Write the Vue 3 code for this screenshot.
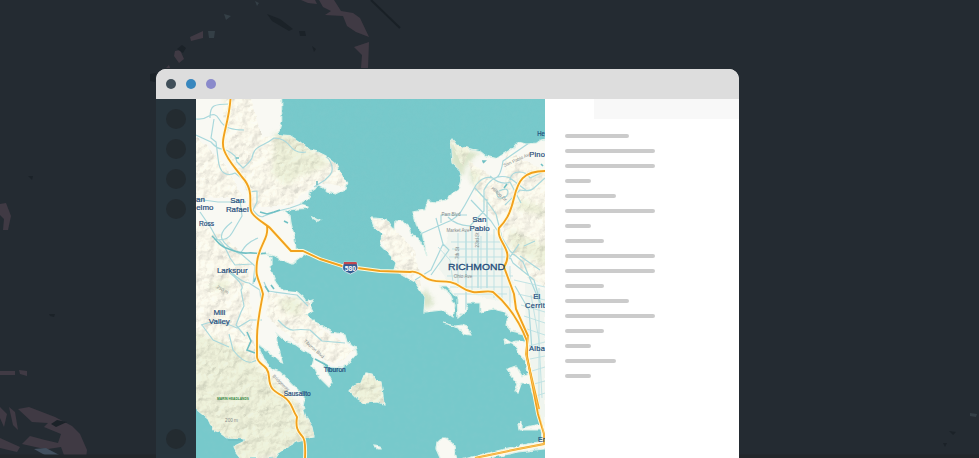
<script setup>
const lines = [64, 90, 90, 26, 51, 90, 26, 39, 90, 90, 39, 64, 90, 39, 26, 51, 26]
const labels = [
  ['San', 237.3, 203], ['Rafael', 237.3, 211.5], ['an', 200.5, 202], ['elmo', 204.8, 210.3],
  ['Mill', 219.3, 314.5], ['Valley', 219.3, 323.5], ['San', 479.3, 222], ['Pablo', 479.5, 230.5],
  ['El', 536.7, 299]
]
</script>

<template>
  <main class="page">
    <svg class="backdrop" viewBox="0 0 979 458" aria-hidden="true">
      <g class="mauve">
        <path d="M301 0 315 0 317 4 308 3ZM319 0 334 0 341 11 353 13 360 18 369 37 356 32 347 26 343 16 325 15 331 11 323 7ZM190 37 203 31 203 38 191 41ZM175 51 180 50 184 59 179 63 174 56ZM354 47 369 42 368 68 361 68 362 55ZM166 68 169 65 170 68Z" />
        <path d="M0 204 6 203 11 216 8 230 3 230 4 219 0 215ZM0 371H15V375H0ZM19 370 27 371 27 376 20 374ZM18 409 29 407 55 417 72 426 80 434 87 450 86 458 65 458 61 447 48 449 40 448 22 444 30 436 45 440 58 443 61 434 44 427 48 423 32 422ZM0 407 7 414 4 427 0 418ZM9 407 15 412 18 430 13 425ZM0 438 20 447 17 452 0 448Z" />
      </g>
      <g class="dark">
        <path d="M267 14 280 19 293 29 289 31 272 21ZM299 31 305 31 306 36 300 36ZM312 46 316 49 314 52ZM177 49 182 45 186 48 183 53ZM150 74 156 73 155 82 150 81ZM28 176 33 176 32 180ZM49 314 55 314 54 317 50 316ZM57 420 67 422 56 427 51 424ZM949 431 956 432 953 435ZM943 443 947 443 945 447Z" />
        <path d="M371 0 400 28" class="fault" />
      </g>
      <path class="steel" d="M34 449 46 448 65 458 50 458Z" />
      <path class="slate" d="M255 1 259 3 257 6ZM224 14 231 16 226 20ZM208 31 215 31 214 38 209 38ZM970 413 977 414 976 417 970 416Z" />
      <rect class="base" y="454.5" width="979" height="3.5" />
    </svg>

    <section class="window">
      <header class="titlebar">
        <i class="dot charcoal"></i><i class="dot blue"></i><i class="dot violet"></i>
      </header>
      <div class="body">
        <aside class="rail">
          <div class="group"><i v-for="n in 4" :key="n" class="knob"></i></div>
          <i class="knob"></i>
        </aside>

        <svg class="map" viewBox="196 99 349 359">
          <defs>
            <path id="land" d="M190 92H281.7V121L279 130 278 134.5 290 135.7 300 142 310 150 318 152 326 156 335 163 340 173 346.7 182 345 189 335 194 328 192 323 187 318 185 315 189 310.7 191.7 308 199 300 204 308 206 308 208.5 297 209 284 211 290 215 291 223 294 235 296 248 300 251 308 253.5 300 258 292 264 281.7 260 275 256 261 252 271 257 271 270 275 281 281.7 290 296.7 291.5 303 297 306.7 302 312.7 300 310 305 313 311 306.7 315 313 321 323 326 332 332 345 335 347 342 355 346 357 354 352 360 342 368 330 367 322 361 332 382 329 387 320 378 312 366 314 359 310 354 303 350 296 345 285 341 276 333 277 342 280 353 282.5 363 278 361 270 353 262 347 257 343 262 354 265 361 272 369 280 372 290 381.7 299 391 305 397 303 405 305.5 417 312 427 314 437 308 438 297 441 288 446 279 452 275 458H240L236 453 233 446.7 245 441 245 439 226.7 438 219 432 213 430 208 419 196 409H190Z
              M552 138 541 140 536.7 143 526 144 518 142 513 148 496.7 158.5 486 156 480 151 468 148 457 146 453 140 450.5 143 452 163 460 170 461.7 178 458 190 452 194 446 200 436 202 428 201 425 210 413 212 417 226 422 233 427 256 423 247 418 238 411.7 236 409 227 403 221 395 221 394 230 391 227 386 219 371 218 374 227 382 234 380 245 391 256 396 263 394 270 415 282 425 298 424 312 443 310 453 317 455 305 450 294 440 286 446 286 457 297 458 318 465 312 468 303 480 303 480 312 493 309 505 312 508 317 506 325 511 331 525 334 527 342 517 341 505 344 504 340 507 340 515 345 518 352 526 361 528 373 522 376 516 366 507 369 513 378 518 384 515 391 518 393 521 384 530 384 532 392 538 410 541 424 531 426 521 428 521 422 518 424 519 430 541 430 542 439 538 442 518 446 480 455 460 460H480L518 452 552 448Z
              M354 386 361 383 365 373 372 374 375 380 381 382 382 389 384 404 376 402 365 403 358 399 350 391Z M437 442 441 438 447 438 453 443 457 460H441L436 449Z M443 323 455 326 462 325 467 327 471 335 464 334 459 328Z M375 445 380 446 381 449 377 449Z M312 217 318 220 322 219 319 221 313 219Z" />
            <clipPath id="shore"><use href="#land" /></clipPath>
            <filter id="relief" x="0" y="0" width="100%" height="100%" color-interpolation-filters="sRGB">
              <feTurbulence type="fractalNoise" baseFrequency=".09" numOctaves="4" seed="8" />
              <feDiffuseLighting surfaceScale="1.7" diffuseConstant="1.07" lighting-color="#fffae6"><feDistantLight azimuth="225" elevation="66" /></feDiffuseLighting>
            </filter>
            <filter id="rough" filterUnits="userSpaceOnUse" x="190" y="92" width="362" height="372" color-interpolation-filters="sRGB">
              <feTurbulence type="fractalNoise" baseFrequency=".16" numOctaves="2" seed="5" result="n" />
              <feDisplacementMap in="SourceGraphic" in2="n" scale="4" xChannelSelector="R" yChannelSelector="G" />
            </filter>
            <filter id="soft"><feGaussianBlur stdDeviation="2.5" /></filter>
            <filter id="grain" x="0" y="0" width="100%" height="100%">
              <feTurbulence type="fractalNoise" baseFrequency=".18" numOctaves="2" seed="3" />
              <feColorMatrix values="0 0 0 0 .3  0 0 0 0 .6  0 0 0 0 .62  .6 0 0 0 -.22" />
            </filter>
            <clipPath id="hills">
              <path d="M190 92H248L262 137 288 135 340 163 346 187 318 182 290 205 250 208 242 175 225 150 222 92ZM190 130 225 165 243 198 190 198ZM190 220 222 235 248 260 250 300 253 340 265 370 305 410 315 435 304 460H190ZM268 292 308 302 320 328 355 350 335 365 290 338 266 315ZM350 370H385V405H350ZM452 140 470 150 462 168ZM372 219 386 220 415 250 425 310 395 270ZM506 150 552 175V290L524 275 503 238ZM468 160 510 190 500 225 477 195Z" />
            </clipPath>
          </defs>
          <rect x="196" y="99" width="349" height="359" fill="#77c9cb" />
          <rect x="196" y="99" width="349" height="359" filter="url(#grain)" opacity=".4" />
          <g filter="url(#rough)">
            <use href="#land" fill="#f9f9f3" stroke="#def1e9" stroke-width="1.2" />
            <g clip-path="url(#shore)">
              <g class="park" filter="url(#soft)">
                <path d="M274 134 292 134 311 150 330 160 323 168 300 176 286 185 273 175ZM449 138 456 146 480 153 467 164 462 177 451 164ZM470 169 481 173 477 187 470 179ZM190 330 222 342 244 350 263 372 287 393 303 411 315 433 304 450 240 460 222 437 190 410ZM207 287 225 292 230 280 215 282ZM278 300 300 298 302 315 286 313ZM511 228 527 239 552 247V268L527 258 508 246ZM519 198 545 208V216L515 208ZM352 376 382 376 383 403 352 402ZM425 288 434 302 426 310 419 299Z" />
              </g>
              <g clip-path="url(#hills)"><rect class="relief" x="190" y="92" width="362" height="372" filter="url(#relief)" /></g>
              <g class="built">
                <path d="M449 232 470 225 503 239 507 257 514 286 513 303 483 298 466 287 448 281 438 267Z" />
                <path d="M525 282 545 290V430L540 415 526 340Z" />
              </g>
            </g>
          </g>
          <g clip-path="url(#shore)">
            <g class="creek">
              <path d="M196 119Q203 120 209 116T219 119 229 128 244 130M196 135 211 142Q217 149 222 149T235 156L237 162 243 168Q250 162 252 158C254 145 263 147 274 138Q284 138 290 146T306 152M210 118Q210 108 214 106T229 104M214 119 211 138 216 142 218 158Q219 170 224 173T235 173L244 180 248 187M196 199 218 202 246 202M200 212 211 228 217 239Q224 243 230 258L235 265 252 264M214 239Q227 242 232 233L242 216 240 200M232 222Q219 232 222 239T240 254C243 250 245 243 258 238M248 192 257 191 257 202 253 210Q260 219 264 216L278 211 290 208 307 202M326 155Q336 168 330 175L325 180 314 187M240 253 255 266 253 284M232 273Q243 283 249 283L260 290 261 302M230 273Q246 286 241 290L244 306 241 312 236 325 245 336M201 325Q208 322 216 322T237 328L250 320 262 320M202 325 213 340 229 347M229 334 233 350Q244 364 252 362L260 359M264 282 268 291 290 294M273 292 297 295 308 306M278 320Q288 331 294 330T310 330L322 341 345 343" />
              <path d="M418 235 445 223Q458 219 465 205L476 185Q484 175 492 178T503 161L529 143M436 218 443 244 431 270 415 280M443 244 449 250 431 275M448 217Q455 225 470 226L484 211V190Q493 172 510 178L527 191M471 200 491 221 501 236 510 251 523 262 540 303M441 223V215H467M487 199V288M466 231V310M478 236V288M505 205 520 190Q530 192 534 188L545 178M524 246 535 241M520 256 540 270M515 286 529 310 532 350M519 244 506 263M490 176Q501 186 510 182L521 203M510 180Q511 172 519 172T530 178L545 171M475 188 486 200 496 214 503 242 513 263 534 280 541 305M499 191Q508 187 508 192T502 198 497 191" />
            </g>
            <path class="streets" d="M451 242H504M452 249H507M449 257H510M447 276H513M450 287H513M458 233V288M472 228V290M481 236V289M494 229V298M502 242V303M510 266V308M449 294H507M514 280 545 287M518 294 545 300M521 305 545 312M524 316 545 323M527 329 545 335M529 346 545 342M530 359 545 356M532 371 545 367M534 384 545 381M536 396 545 393M531 295 539 340 542 398M539 288V419M438 247 450 260 453 282" />
          </g>
          <g class="lagoon">
            <path d="M212 236C217 240 218 245 226 248S241 254 248 253 259 255 266 253M236 158 239 158M257 274 254 282M247 332 251 341 247 350 255 353M317 181V185M284 221 288 223M507 184 504 188M482 161 485 161 483 163M541 164 543 166M265 286 269 292M271 285 274 289M315 359 328 366M228 440 242 440M260 212 267 214 274 212 280 210" />
          </g>
          <g class="casing">
            <path d="M230.5 99C228.5 126 220 139 224 150S234 166 242 177C256 192 247 206 252 213S266 224 270 228L291 251H303L320 259 342 266 380 271 410 272Q416 270 426 278C437 285 447 277 461 287S484 289 493 292C509 305 520 323 527 341V356L538 414 544 434V444L518 449 475 458" />
            <path d="M267 226C269 239 259 245 257 262S259 278 263 294C260 310 257 323 257 337V357C258 366 268 363 269 377S275 391 284 397 291 408 297 417C295 429 299 432 302 436Q306 439 305 458M545 171C523 171 518 181 514 198S505 222 499 228C496 243 515 249 504 267L514 294 516 309 528 336 526 354 539 409" />
          </g>
          <g class="highway">
            <path d="M230.5 99C228.5 126 220 139 224 150S234 166 242 177C256 192 247 206 252 213S266 224 270 228L291 251H303L320 259 342 266 380 271 410 272Q416 270 426 278C437 285 447 277 461 287S484 289 493 292C509 305 520 323 527 341V356L538 414 544 434V444L518 449 475 458" />
            <path d="M267 226C269 239 259 245 257 262S259 278 263 294C260 310 257 323 257 337V357C258 366 268 363 269 377S275 391 284 397 291 408 297 417C295 429 299 432 302 436Q306 439 305 458M545 171C523 171 518 181 514 198S505 222 499 228C496 243 515 249 504 267L514 294 516 309 528 336 526 354 539 409" />
          </g>
          <path class="median" d="M528 336 526 354 544 434V444L518 449 475 458" />
          <g class="shield">
            <path d="M344 262.3H356.5Q359 268 357 270.5 354 272.5 350.3 274 346.5 272.5 343.5 270.5 341.5 268 344 262.3Z" />
            <path class="red" d="M344 262H356.5L357 264.3H343.5Z" />
            <text x="350.3" y="270.6">580</text>
          </g>
          <g class="town">
            <text v-for="l in labels" :key="l[0] + l[1]" :x="l[1]" :y="l[2]">{{ l[0] }}</text>
            <text x="232.3" y="272.5">Larkspur</text>
            <text class="small" x="206.5" y="225.5">Ross</text>
            <text class="small" x="334.7" y="372">Tiburon</text>
            <text class="small" x="297.2" y="396">Sausalito</text>
            <text class="start" x="537.3" y="135.5" textLength="7.6" lengthAdjust="spacingAndGlyphs">He</text>
            <text class="start" x="529.3" y="156.5" textLength="15.5">Pino</text>
            <text class="start" x="525" y="307.5" textLength="19.8">Cerrit</text>
            <text class="start" x="529" y="350.5" textLength="15.8">Alba</text>
            <text class="start" x="538" y="441.5" textLength="7" lengthAdjust="spacingAndGlyphs">Er</text>
            <text class="city" x="476.5" y="270" textLength="57" lengthAdjust="spacingAndGlyphs">RICHMOND</text>
          </g>
          <text class="headlands" x="233" y="399.7" textLength="32" lengthAdjust="spacingAndGlyphs">MARIN HEADLANDS</text>
          <g class="road">
            <text x="231.5" y="421.8">200 m</text>
            <text transform="translate(222 291) rotate(28)">250 m</text>
            <text transform="translate(518 161) rotate(-24)">San Pablo Ave</text>
            <text x="451" y="215.5">Parr Blvd</text>
            <text x="458" y="231.5">Market Ave</text>
            <text x="463" y="277.5">Ohio Ave</text>
            <text transform="translate(479 240) rotate(-90)">23rd St</text>
            <text transform="translate(459 253) rotate(-90)">7th St</text>
            <text transform="translate(498 195) rotate(42)">Hilltop Dr</text>
            <text transform="translate(313 350) rotate(42)">Tiburon Blvd</text>
            <text transform="translate(280 384) rotate(44)">Bridgeway</text>
          </g>
        </svg>

        <section class="details">
          <div class="tabs"><span class="active"></span><span class="idle"></span></div>
          <div class="lines">
            <i v-for="(w, i) in lines" :key="i" class="line" :style="{ width: w + 'px' }"></i>
          </div>
        </section>
      </div>
    </section>
  </main>
</template>

<style>
body { margin: 0; }
</style>

<style scoped>
.page { display: flex; box-sizing: border-box; width: 979px; height: 458px; padding: 69px 0 0 156px; position: relative; overflow: hidden; background: #242b32; font-family: "Liberation Sans", sans-serif; }
.backdrop { position: absolute; inset: 0; width: 979px; height: 458px; filter: blur(.6px); }
.mauve { fill: #403a44; }
.dark { fill: #1b2228; }
.fault { fill: none; stroke: #192026; stroke-width: 2; }
.steel { fill: #43505f; }
.slate { fill: #343f46; }
.base { fill: #22272b; }
.window { position: relative; display: flex; flex-direction: column; width: 583px; height: 389px; overflow: hidden; border-radius: 10px 10px 0 0; background: #fff; }
.titlebar { display: flex; align-items: center; gap: 10px; height: 30px; padding-left: 10px; background: #ddd; }
.dot { width: 10px; height: 10px; border-radius: 50%; }
.charcoal { background: #404f59; }
.blue { background: #3887be; }
.violet { background: #8a8acb; }
.body { display: flex; height: 359px; }
.rail { display: flex; flex-direction: column; justify-content: space-between; box-sizing: border-box; width: 40px; padding: 10px 10px 9px; background: #28353d; }
.group { display: flex; flex-direction: column; gap: 10px; }
.knob { display: block; width: 20px; height: 20px; border-radius: 50%; background: #232b30; }
.map { display: block; width: 349px; height: 359px; }
.details { flex: 1; }
.tabs { display: flex; height: 20px; }
.active { width: 49px; }
.idle { flex: 1; background: #f8f8f8; }
.lines { display: flex; flex-direction: column; gap: 11px; padding: 15px 20px; }
.line { height: 4px; border-radius: 2px; background: #cbcbcb; }
.park { fill: #d9e4c9; }
.relief { mix-blend-mode: multiply; opacity: .55; }
.built { fill: #edf3ee; opacity: .75; }
.creek { fill: none; stroke: #a9d8dc; stroke-width: 1.2; stroke-linejoin: round; }
.streets { fill: none; stroke: #b9dfe2; stroke-width: .85; }
.lagoon { fill: none; stroke: #70c0c4; stroke-width: 1.6; }
.casing { fill: none; stroke: #fffbdc; stroke-width: 3.8; stroke-linejoin: round; }
.highway { fill: none; stroke: #f2a11c; stroke-width: 1.9; stroke-linejoin: round; }
.median { fill: none; stroke: #ffe2a0; stroke-width: .5; }
.shield { fill: #315c91; stroke: #fff; stroke-width: .7; }
.shield .red { fill: #c34850; stroke: none; }
.shield text { fill: #fff; stroke: none; font-size: 6.8px; font-weight: 700; text-anchor: middle; }
.town { fill: #1f4c7a; stroke: #1f4c7a; stroke-width: .2; font-size: 7.9px; text-anchor: middle; }
.town .small { font-size: 6.6px; }
.town .start { text-anchor: start; font-size: 7.5px; }
.town .city { font-size: 9.2px; stroke-width: .3; }
.headlands { fill: #338744; font-size: 3.5px; font-weight: 700; text-anchor: middle; }
.road { fill: #858989; font-size: 4.6px; text-anchor: middle; }
</style>
